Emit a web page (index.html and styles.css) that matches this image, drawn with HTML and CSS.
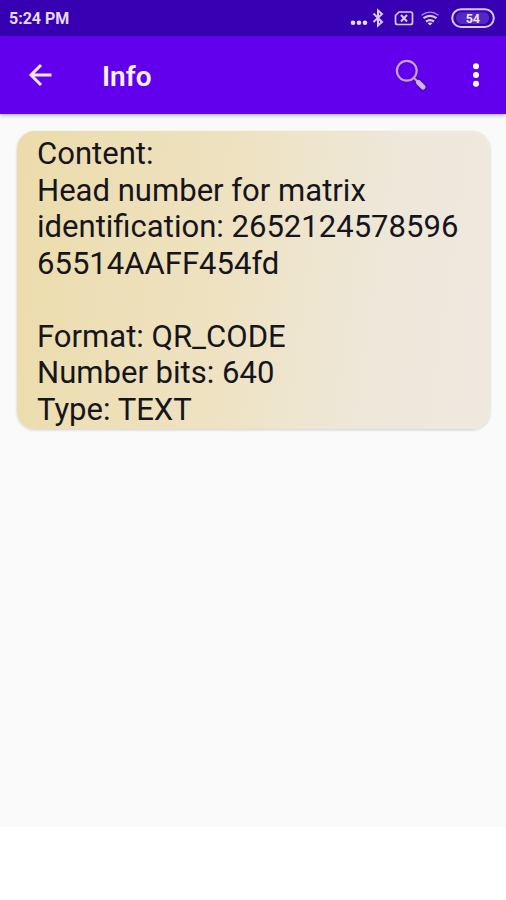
FILE: index.html
```html
<!DOCTYPE html>
<html lang="en">
<head>
<meta charset="utf-8">
<title>Info</title>
<link rel="stylesheet" href="styles.css">
</head>
<body>
<div class="screen">
  <div class="status">
    <span class="time">5:24 PM</span>
    <svg class="status-icons" width="156" height="36" viewBox="350 0 156 36" fill="none" stroke="#d9c9fa">
      <g fill="#e6dcfc" stroke="none"><circle cx="353" cy="22.800" r="2.300"/><circle cx="359" cy="22.800" r="2.300"/><circle cx="365" cy="22.800" r="2.300"/></g>
      <path stroke-width="2" d="M373.500 13.500L382 22L378 25.500V10.500L382 14L373.500 22"/>
      <path stroke-width="1.700" d="M399 12H410.500Q412.500 12 412.500 14V22.500Q412.500 24.500 410.500 24.500H397.500Q395.500 24.500 395.500 22.500V15.500Z"/>
      <path stroke-width="2" d="M401 15L407 21.500M407 15L401 21.500"/>
      <path stroke-width="1.400" stroke="#a78be6" d="M421.500 15.200Q430 9 438.500 15.200"/>
      <path stroke-width="2.200" d="M423.500 18.200Q430 13.500 436.500 18.200M426 21.500Q430 18.800 434 21.500"/>
      <path fill="#e6dcfc" stroke="none" d="M427.500 23Q430 21.800 432.500 23L430 25.600Z"/>
      <rect x="452.200" y="9.200" width="41.600" height="17.800" rx="8.900" stroke-width="2"/>
      <path fill="#5527c5" stroke="none" d="M461 12.300H484.500Q489 13 489 18T484.500 24H461Q456 23 456 18T461 12.300Z"/>
      <text class="level" x="472.800" y="22.500" text-anchor="middle">54</text>
    </svg>
  </div>
  <header class="bar">
    <svg class="back" width="24" height="24" viewBox="0 0 24 24" fill="none" stroke="#f1e8ff" stroke-width="3"><path d="M24.500 12H4M14 2L4 12L14 22"/></svg>
    <h1 class="title">Info</h1>
    <svg class="search" width="34" height="34" viewBox="394 58 34 34" fill="none" stroke-linecap="round">
      <circle cx="406.800" cy="70.800" r="9.900" stroke="#4c0cb8" stroke-width="4"/>
      <path stroke="#4010a0" stroke-width="7.500" d="M418.500 82.500L423 87"/>
      <path stroke="#4010a0" stroke-width="4" d="M414 78L418 82"/>
      <circle cx="406.800" cy="70.800" r="9.900" stroke="#c79cf5" stroke-width="2.200"/>
      <path stroke="#c79cf5" stroke-width="2" d="M414 78L418 82"/>
      <path stroke="#d3aefa" stroke-width="5.200" d="M418.500 82.500L423 87"/>
    </svg>
    <svg class="more" width="8" height="26" viewBox="0 0 8 26" fill="#fff"><circle cx="4" cy="4.300" r="3"/><circle cx="4" cy="13" r="3"/><circle cx="4" cy="21.700" r="3"/></svg>
  </header>
  <main class="content">
    <section class="card">
      <p class="text">Content:<br>Head number for matrix<br>identification: 2652124578596<br>65514AAFF454fd<br><br>Format: QR_CODE<br>Number bits: 640<br>Type: TEXT</p>
    </section>
  </main>
</div>
</body>
</html>
```
FILE: styles.css
```css
* { box-sizing: border-box; }
body { margin: 0; background: #fff; font-family: Roboto, sans-serif; }
.screen { height: 827px; display: flex; flex-direction: column; background: #fafafa; }
.status { height: 36px; flex: none; display: flex; align-items: center; justify-content: space-between; padding-left: 9px; background: #3700b3; }
.time { color: #e6dcfc; font-size: 16px; font-weight: 700; line-height: 20px; padding-top: 2px; }
.level { fill: #f1eaff; stroke: none; font-size: 12.5px; font-weight: 700; }
.bar { height: 78px; flex: none; display: flex; align-items: center; padding: 0 26px 0 27px; background: #6200ee; box-shadow: 0 1px 4px rgba(0, 0, 0, .35); }
.back { overflow: visible; }
.title { margin: 3px 0 0 51px; color: #f6f0ff; font-size: 28px; font-weight: 600; line-height: 32px; }
.search { margin-left: auto; }
.more { margin-left: 44px; }
.content { padding: 17px 16px 0 17px; }
.card { height: 298px; padding: 5px 20px 0; border-radius: 18px; background: linear-gradient(98deg, #ecdcab 0%, #eee2c2 45%, #eee8da 75%, #eee8df 100%); box-shadow: 0 1px 3px rgba(0, 0, 0, .18); }
.text { margin: 0; color: #16151c; font-size: 31.05px; line-height: 36.55px; white-space: nowrap; }
```
